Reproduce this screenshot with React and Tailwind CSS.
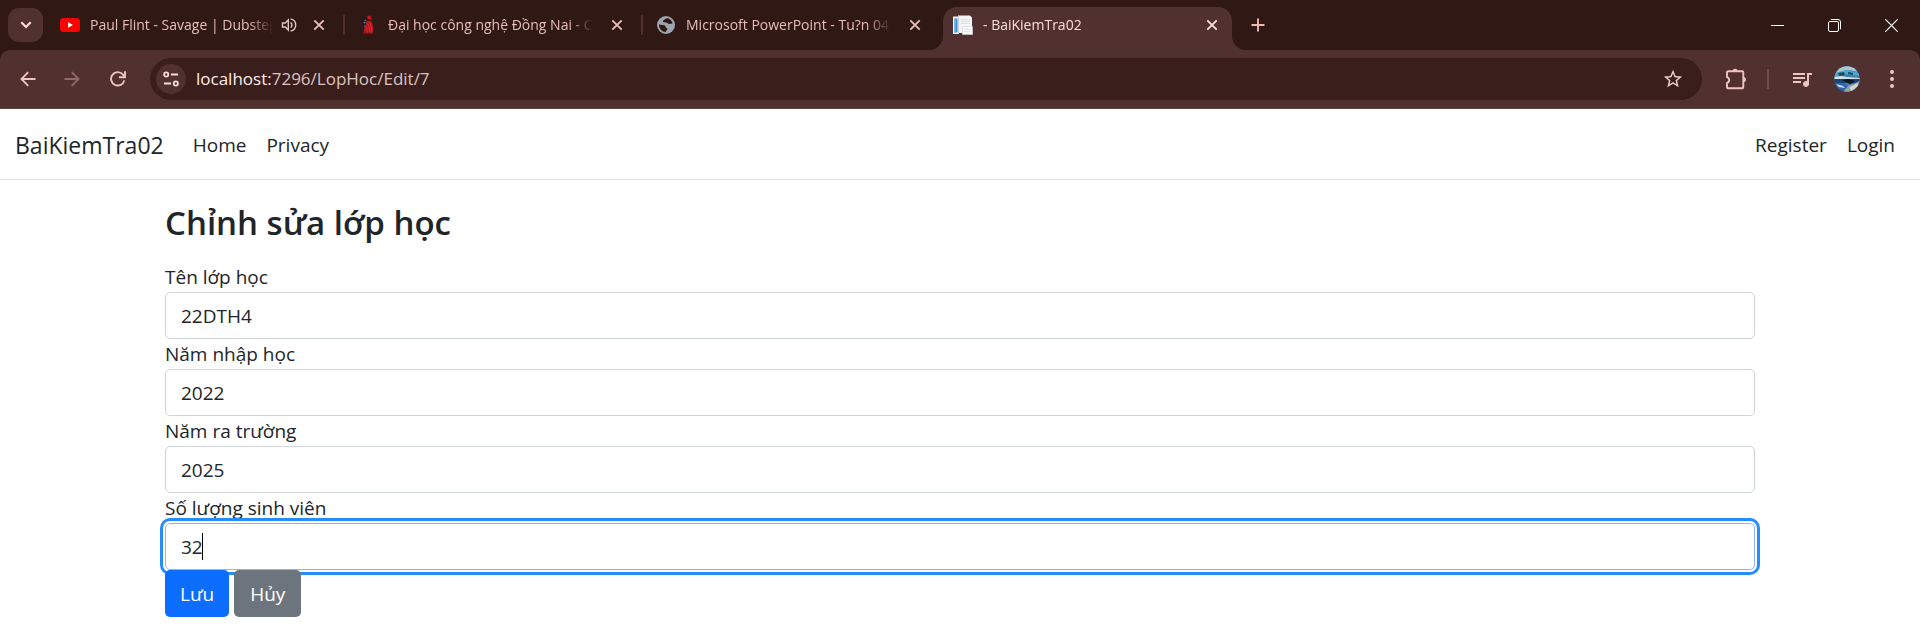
import React from "react";
import { MdQueueMusic, MdStarBorder } from "react-icons/md";

function CloseIcon() {
  return (
    <svg viewBox="0 0 12 12" className="size-3" fill="none" stroke="currentColor" strokeWidth="1.9">
      <path d="M1.3 1.3 10.7 10.7M10.7 1.3 1.3 10.7" />
    </svg>
  );
}

function YouTubeIcon() {
  return (
    <svg viewBox="0 0 20 14" className="h-[14px] w-5">
      <rect width="20" height="14" rx="3.5" fill="#ff0000" />
      <path d="M8 4.2 13 7 8 9.8Z" fill="#fff" />
    </svg>
  );
}

function SchoolIcon() {
  return (
    <svg viewBox="0 0 20 20" className="size-5">
      <path d="M9.4.8h3.4v2.400l1.400-.6-.8 2h-2.600L9.200 3Z" fill="#c4161c" />
      <path d="M8 7c2-2 5-1.600 6 .6 1 2 1.500 4.400 1.200 7L15 18.800H5l1.200-2.200-1-1.400 1.600-1.600-.8-2 1.800-1.400Z" fill="#b5121b" />
      <path d="M8.500 8.500c2 .2 3.500 4 3.300 10M11 7.400c2 1 3 6 2.500 11M7.600 12c1.200 1 1.800 3.500 1.600 6.500" stroke="#e03a3e" strokeWidth=".8" fill="none" />
      <circle cx="7.500" cy="5.400" r=".9" fill="#2f6fb5" />
      <circle cx="6.600" cy="7.600" r=".9" fill="#2f8fc5" />
      <circle cx="7" cy="11" r=".8" fill="#2f6fb5" />
      <path d="M5 17.600h10.500v1.600H5z" fill="#6d1414" />
    </svg>
  );
}

function GlobeIcon() {
  return (
    <svg viewBox="0 0 18 18" className="size-[18px]">
      <circle cx="9" cy="9" r="9" fill="#9aa5ad" />
      <path
        d="M10.800 2.300c-2.300-.2-2.600 1.400-3.800 1.700-1.400.3-1.400 1.900-.3 2.300 1.200.4 3.300-.2 4 1 .6 1.200 2.800.6 4.900.2A7 7 0 0 0 10.800 2.300Z"
        fill="#301815"
      />
      <path
        d="M2 8.200c1.600.9 4.400.4 5.800 1.300 1.200.8.300 2 1.600 2.400 1.400.4 1.300 1.800.2 2.500-.6.4-.5 1-.6 1.700A7.100 7.100 0 0 1 2 8.200Z"
        fill="#301815"
      />
    </svg>
  );
}

function DocumentsIcon() {
  return (
    <svg viewBox="0 0 20 20" className="size-5">
      <path d="M0 1.500h6V19H0z" fill="#f4f7fa" />
      <path d="M1.200 3.500h3.300v14H1.200z" fill="#3f93cf" />
      <path d="M1.200 3.500h1.400v14H1.200z" fill="#7dbbe6" />
      <path d="M5 .4h12l2 2.200V18H5z" fill="#f3f5f7" />
      <path d="M5 .4h1v17.600H5z" fill="#c3ccd4" />
      <path d="M8 4.500h9M8 6.500h9M8 8.500h9" stroke="#d4dae0" strokeWidth=".8" />
      <path d="M9.500 11.500h10V19.600h-10z" fill="#fbfcfd" stroke="#cbd2d9" strokeWidth=".6" />
      <path d="M11.500 14h6M11.500 16.200h6" stroke="#d4dae0" strokeWidth=".9" />
    </svg>
  );
}

function SpeakerIcon() {
  return (
    <svg viewBox="0 0 16 16" className="size-4" fill="none" stroke="currentColor" strokeWidth="1.4">
      <path d="M1.500 6h2.700L7.300 3v10L4.200 10H1.500Z" />
      <path d="M9.600 5.400a3.200 3.200 0 0 1 0 5.200M9.600 1.900c6.800 1.500 6.800 10.700 0 12.200" />
    </svg>
  );
}

function Tab({ icon, title, audio, active }) {
  return (
    <div
      className={
        "relative flex h-[43px] min-w-0 flex-[0_1_289px] items-center pb-[7px] pl-[10px] pr-[14px] " +
        (active ? "rounded-t-[14px] bg-[#50312f] text-[#f8dfdb]" : "text-[#e7bdb8]")
      }
    >
      {active && (
        <>
          <svg viewBox="0 0 14 14" className="absolute -left-[14px] bottom-0 size-[14px]" fill="#50312f">
            <path d="M14 0v14H0A14 14 0 0 0 14 0Z" />
          </svg>
          <svg viewBox="0 0 14 14" className="absolute -right-[14px] bottom-0 size-[14px]" fill="#50312f">
            <path d="M0 0v14h14A14 14 0 0 1 0 0Z" />
          </svg>
        </>
      )}
      <span className="flex w-5 shrink-0 justify-center">{icon}</span>
      <span className="ml-[10px] min-w-0 flex-1 overflow-hidden whitespace-nowrap text-[14px] leading-5 [mask-image:linear-gradient(to_right,black_calc(100%-24px),transparent)]">
        {title}
      </span>
      {audio && (
        <button aria-label="Mute tab" className="ml-2 shrink-0 text-[#e0c8c4]">
          <SpeakerIcon />
        </button>
      )}
      <button aria-label="Close tab" className={"shrink-0 " + (audio ? "ml-4" : "ml-[18px]")}>
        <CloseIcon />
      </button>
    </div>
  );
}

function Separator() {
  return (
    <div className="flex h-9 w-[9px] shrink-0 items-center justify-center">
      <div className="h-5 w-[2px] rounded-full bg-[#50312f]" />
    </div>
  );
}

function TabStrip() {
  return (
    <div className="flex h-[50px] bg-[#301815] pt-[7px]">
      <button
        aria-label="Search tabs"
        className="ml-2 mr-[7px] mt-px flex h-[34px] w-[35px] shrink-0 items-center justify-center rounded-[11px] bg-[#50312f] text-[#f8dfdb]"
      >
        <svg viewBox="0 0 12 8" className="h-2 w-3" fill="none" stroke="currentColor" strokeWidth="2.200">
          <path d="M1.300 1.300 6 6 10.700 1.300" />
        </svg>
      </button>
      <Tab icon={<YouTubeIcon />} title="Paul Flint - Savage | Dubstep" audio />
      <Separator />
      <Tab icon={<SchoolIcon />} title="Đại học công nghệ Đồng Nai - C" />
      <Separator />
      <Tab icon={<GlobeIcon />} title="Microsoft PowerPoint - Tu?n 04." />
      <div className="w-2 shrink-0" />
      <Tab icon={<DocumentsIcon />} title="- BaiKiemTra02" active />
      <button aria-label="New tab" className="ml-[18px] flex h-9 w-4 shrink-0 items-center justify-center text-[#f0b8b2]">
        <svg viewBox="0 0 14 14" className="size-[14px]" fill="none" stroke="currentColor" strokeWidth="1.900">
          <path d="M7 .5v13M.5 7h13" />
        </svg>
      </button>
      <div className="-mt-[7px] ml-auto flex h-[50px] shrink-0 text-white">
        <button aria-label="Minimize" className="flex w-[57px] items-center justify-center">
          <svg viewBox="0 0 13 13" className="size-[13px]" stroke="currentColor">
            <path d="M0 6.500h13" />
          </svg>
        </button>
        <button aria-label="Restore" className="flex w-[57px] items-center justify-center">
          <svg viewBox="0 0 13 13" className="size-[13px]" fill="none" stroke="currentColor">
            <rect x=".5" y="2.500" width="10" height="10" rx="1.500" />
            <path d="M2.800.5h7.200a2.500 2.500 0 0 1 2.500 2.500v7.200" />
          </svg>
        </button>
        <button aria-label="Close window" className="flex w-[57px] items-center justify-center">
          <svg viewBox="0 0 13 13" className="size-[13px]" fill="none" stroke="currentColor" strokeWidth="1.200">
            <path d="M.3.3 12.700 12.700M12.700.3.3 12.700" />
          </svg>
        </button>
      </div>
    </div>
  );
}

function Toolbar() {
  return (
    <div className="bg-[#301815]">
      <div className="flex h-[59px] items-center rounded-t-[10px] border-b border-[#5c4644] bg-[#50312f] pl-5 pr-5 text-[#f0c4be]">
        <button aria-label="Back" className="shrink-0">
          <svg viewBox="0 0 16 16" className="size-4" fill="none" stroke="currentColor" strokeWidth="1.900">
            <path d="M15.500 8H1.800M8.200 1.200 1.500 8l6.700 6.800" />
          </svg>
        </button>
        <button aria-label="Forward" className="ml-7 shrink-0 text-[#8f6a66]">
          <svg viewBox="0 0 16 16" className="size-4" fill="none" stroke="currentColor" strokeWidth="1.900">
            <path d="M.5 8h13.700M7.800 1.200 14.500 8l-6.700 6.800" />
          </svg>
        </button>
        <button aria-label="Reload" className="ml-[30px] shrink-0">
          <svg viewBox="0 0 16 16" className="size-4" fill="none" stroke="currentColor" strokeWidth="1.900">
            <path d="M14.300 9.400A6.700 6.700 0 1 1 12.800 3.400L14.500 5.400" />
            <path d="M15 .3v5.900H9" />
          </svg>
        </button>
        <div className="ml-6 flex h-[42px] min-w-0 flex-1 items-center rounded-full bg-[#3a1e1b] pl-[6px] pr-[18px]">
          <button
            aria-label="View site information"
            className="flex size-[30px] shrink-0 items-center justify-center rounded-full bg-[#50312f] text-[#f8dfdb]"
          >
            <svg viewBox="0 0 16 16" className="size-4" fill="none" stroke="currentColor" strokeWidth="1.800">
              <circle cx="3.200" cy="3.500" r="2.100" />
              <path d="M8 3.500h7M1 12.500h7" />
              <circle cx="12.800" cy="12.500" r="2.100" />
            </svg>
          </button>
          <div className="ml-[10px] min-w-0 flex-1 truncate text-[17px] leading-6 text-[#dcc3c0]">
            <span className="text-[#ffedea]">localhost:</span>7296/LopHoc/Edit/7
          </div>
          <button aria-label="Bookmark this tab" className="shrink-0 text-[#e9cfcb]">
            <MdStarBorder className="size-[22px]" />
          </button>
        </div>
        <button aria-label="Extensions" className="ml-[23px] shrink-0">
          <svg viewBox="0 0 22 22" className="size-[22px]" fill="none" stroke="currentColor" strokeWidth="1.900">
            <path d="M2 4.300a1 1 0 0 1 1-1h14.300a1 1 0 0 1 1 1v15a1 1 0 0 1-1 1H3a1 1 0 0 1-1-1v-4.300a3.100 3.100 0 0 0 0-5.900Z" />
            <path d="M7.500 3.300a2.600 2.600 0 0 1 5.200 0ZM18.300 9a2.600 2.600 0 0 1 0 5.200Z" fill="currentColor" stroke="none" />
          </svg>
        </button>
        <div className="ml-5 h-5 w-[2px] shrink-0 bg-[#6d4c49]" />
        <button aria-label="Media controls" className="ml-[21px] shrink-0">
          <MdQueueMusic className="size-6" />
        </button>
        <button aria-label="Profile" className="ml-5 shrink-0">
          <svg viewBox="0 0 26 26" className="size-[26px]">
            <defs>
              <clipPath id="avatar">
                <circle cx="13" cy="13" r="12.700" />
              </clipPath>
            </defs>
            <g clipPath="url(#avatar)">
              <path d="M0 0h26v26H0z" fill="#3f7fae" />
              <path d="M0 0h26v6L14 4 0 8z" fill="#a9c9cf" />
              <path d="M0 7 12 4l14 3v3L13 8 0 11z" fill="#4aa7d8" />
              <path d="M4 7l6-1 1 3-6 1zM14 6l5 1v2l-5-1z" fill="#1f4a52" />
              <path d="M0 11l7-1 6 1 13 1v1H0z" fill="#d3dfe6" />
              <path d="M0 13h26l-3 5-12-1-11 2z" fill="#1d4470" />
              <path d="M8 14l6-1 7 2-5 3z" fill="#0b1220" />
              <path d="M0 17l9 0 6 4-4 5H0z" fill="#2d62b3" />
              <path d="M2 18l7 2 2 2-6-1z" fill="#cfe2f5" />
              <path d="M14 20l12-5v11H9z" fill="#97a0a3" />
              <path d="M16 21l8-4v3l-7 5z" fill="#d8d6cf" />
            </g>
          </svg>
        </button>
        <button aria-label="Menu" className="ml-6 shrink-0">
          <svg viewBox="0 0 16 20" className="h-5 w-4" fill="currentColor">
            <circle cx="8" cy="3" r="2" />
            <circle cx="8" cy="10" r="2" />
            <circle cx="8" cy="17" r="2" />
          </svg>
        </button>
      </div>
    </div>
  );
}

function NavBar() {
  return (
    <nav className="flex h-[71px] items-center border-b border-[#dee2e6] pl-[15px] pr-[25px] pt-px text-[19px] leading-[30px] text-[#212529]">
      <a href="#" className="text-[23px]">BaiKiemTra02</a>
      <a href="#" className="ml-[29px]">Home</a>
      <a href="#" className="ml-5">Privacy</a>
      <div className="ml-auto flex gap-5">
        <a href="#">Register</a>
        <a href="#">Login</a>
      </div>
    </nav>
  );
}

const fields = [
  { id: "TenLopHoc", label: "Tên lớp học", value: "22DTH4" },
  { id: "NamNhapHoc", label: "Năm nhập học", value: "2022" },
  { id: "NamRaTruong", label: "Năm ra trường", value: "2025" },
  { id: "SoLuongSinhVien", label: "Số lượng sinh viên", value: "32", focused: true },
];

function Field({ id, label, value, focused }) {
  return (
    <div>
      <label htmlFor={id} className="block pt-px text-[19px] leading-[29px]">{label}</label>
      <div className="relative">
        <input
          id={id}
          name={id}
          defaultValue={value}
          className={
            "block h-[47px] w-full rounded-[5px] border bg-white px-[15px] pt-px text-[19px] leading-[30px] outline-none " +
            (focused
              ? "border-[#86b7fe] shadow-[0_0_0_2px_#fff,0_0_0_5px_#258cfb]"
              : "border-[#ced4da]")
          }
        />
        {focused && <span className="absolute left-[37px] top-[10px] h-[27px] w-px bg-black" />}
      </div>
    </div>
  );
}

export default function App() {
  return (
    <div className="min-h-screen bg-white font-['Open_Sans','Noto_Sans',sans-serif] text-[#212529]">
      <header>
        <TabStrip />
        <Toolbar />
      </header>
      <NavBar />
      <main className="mx-auto max-w-[1620px] px-[15px] pt-5">
        <h1 className="text-[33px] font-semibold leading-[46px]">Chỉnh sửa lớp học</h1>
        <form className="mt-4" onSubmit={(e) => e.preventDefault()}>
          {fields.map((f) => (
            <Field key={f.id} {...f} />
          ))}
          <div className="relative flex gap-[5px] text-[19px] leading-[30px] text-white">
            <button type="submit" className="h-[47px] rounded-[5px] bg-[#0d6efd] px-[15px] pt-px">Lưu</button>
            <a href="#" className="flex h-[47px] items-center rounded-[5px] bg-[#6c757d] px-4 pt-px">Hủy</a>
          </div>
        </form>
      </main>
    </div>
  );
}
